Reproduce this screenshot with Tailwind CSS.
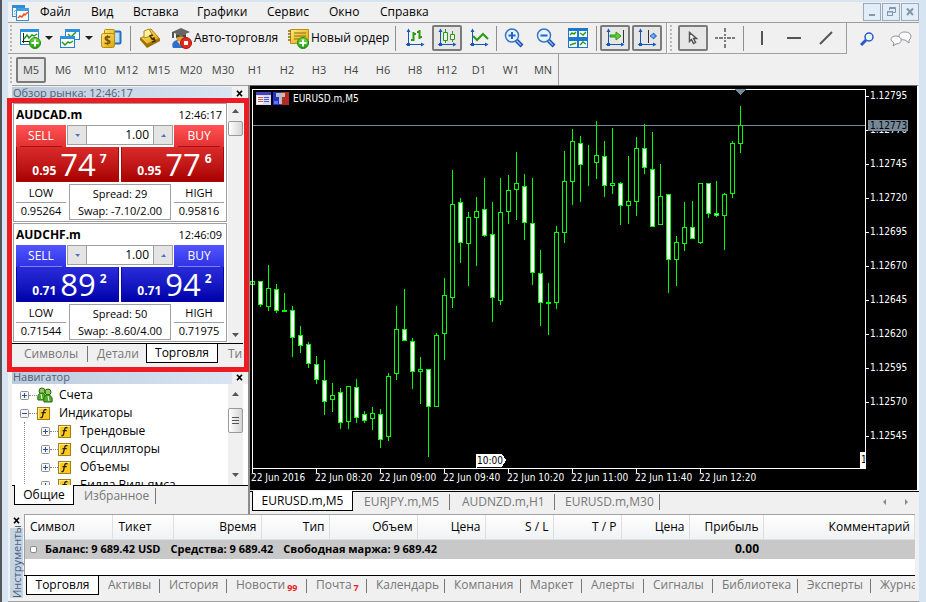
<!DOCTYPE html>
<html lang="ru">

<head>
   <meta charset="UTF-8">
   <meta name="viewport" content="width=device-width, initial-scale=1.0">
   <title>MetaTrader 5</title>
   <script src="https://cdn.jsdelivr.net/npm/@tailwindcss/browser@4"></script>
</head>

<body class="flex min-h-screen flex-col overflow-hidden border-l-2 border-[#54565c] bg-[#d7e4f2] pt-0.5 pr-[7px] pl-1.5 font-['Open_Sans','Noto_Sans',sans-serif] text-xs leading-4 text-black">

   <!-- shared icons -->
   <svg class="absolute size-0">
      <defs>
         <linearGradient id="gold" x1="0" y1="0" x2="1" y2="1"><stop offset="0" stop-color="#ffe97a"/><stop offset="1" stop-color="#dfa400"/></linearGradient>
         <linearGradient id="green" x1="0" y1="0" x2="0" y2="1"><stop offset="0" stop-color="#7fdc4c"/><stop offset="1" stop-color="#1d9a10"/></linearGradient>
         <symbol id="plus" viewBox="0 0 12 12"><circle cx="6" cy="6" r="5.5" fill="url(#green)" stroke="#1c8d12"/><path d="M6 2.500v7M2.500 6h7" stroke="#fff" stroke-width="2"/></symbol>
         <symbol id="axes" viewBox="0 0 20 20"><path d="M3.500 2v16M1 16.500h17" stroke="#1857b8" fill="none"/><path d="M1.500 4h4l-2-3.500zM16 14.500v4l3.500-2z" fill="#1857b8"/><path d="M2 15h3v3h-3z" fill="#1857b8"/></symbol>
         <symbol id="fx" viewBox="0 0 13 13"><rect x=".5" y=".5" width="12" height="12" fill="#ffc91d" stroke="#a87f12"/><path d="M1.500 11.500v-10h10" stroke="#fff2a8" fill="none"/><path d="M9.500 2.800c-2-.9-2.600.2-3 2.200l-.9 4c-.3 1.500-1 1.800-2.200 1.500M4.500 5.700h4.300" stroke="#222" stroke-width="1.300" fill="none"/></symbol>
         <symbol id="closed" viewBox="0 0 9 9"><rect x=".5" y=".5" width="8" height="8" rx="1" fill="#f6f6f6" stroke="#8f8f8f"/><path d="M2 4.500h5M4.500 2v5" stroke="#2f4f9e"/></symbol>
         <symbol id="opened" viewBox="0 0 9 9"><rect x=".5" y=".5" width="8" height="8" rx="1" fill="#f6f6f6" stroke="#8f8f8f"/><path d="M2 4.500h5" stroke="#2f4f9e"/></symbol>
         <symbol id="cross" viewBox="0 0 7 7"><path d="M1 .7l5 5.600M6 .7l-5 5.600" stroke="#000" stroke-width="1.700"/></symbol>
         <symbol id="lens" viewBox="0 0 20 20"><path d="M12 12l6 6" stroke="#174fae" stroke-width="4"/><path d="M12 12l5 5" stroke="#8ebcf2" stroke-width="1.500"/><circle cx="8" cy="7.500" r="6.500" fill="#e6f3fd" stroke="#3d74c4" stroke-width="1.500"/></symbol>
      </defs>
   </svg>

   <!-- menu -->
   <header class="flex h-[21px] items-center border-b border-[#9b9b9b] bg-[#f0f0f0] pl-1">
      <svg class="mr-[11px] size-[17px] shrink-0" viewBox="0 0 17 17">
         <rect x=".5" y="1.500" width="12" height="11" fill="#fff" stroke="#2c8ed6"/><path d="M0 1h13v3h-13z" fill="#2c8ed6"/><path d="M2 8l2-2M2 10h3" stroke="#6db3e6"/>
         <rect x="4.500" y="4.500" width="12" height="12" fill="#fff" stroke="#2c8ed6"/><path d="M4 4h13v3h-13z" fill="#3e9fe2"/><path d="M6 14l2-2 2 1 2-3 1 1 3-3" fill="none" stroke="#f05020" stroke-width="1.500"/>
      </svg>
      <nav class="flex flex-1 whitespace-nowrap">
         <a href="#" class="w-[51px]">Файл</a>
         <a href="#" class="w-[42px]">Вид</a>
         <a href="#" class="w-16">Вставка</a>
         <a href="#" class="w-[70px]">Графики</a>
         <a href="#" class="w-[62px]">Сервис</a>
         <a href="#" class="w-[51px]">Окно</a>
         <a href="#">Справка</a>
      </nav>
      <div class="flex gap-px">
         <button aria-label="Свернуть" class="flex size-[18px] items-center justify-center border border-[#9aaabb] bg-[#e1edf9]"><svg width="12" height="12"><path d="M3 8h6v2h-6z" fill="#8496aa"/></svg></button>
         <button aria-label="Восстановить" class="flex size-[18px] items-center justify-center border border-[#9aaabb] bg-[#e1edf9]"><svg width="12" height="12" fill="none" stroke="#8496aa"><path d="M4.500 4v-2.500h6v5h-2.500M4 2.500h7"/><rect x="2.500" y="5.500" width="5" height="4"/><path d="M2 6h6"/></svg></button>
         <button aria-label="Закрыть" class="flex size-[18px] items-center justify-center border border-[#9aaabb] bg-[#e1edf9]"><svg width="12" height="12"><path d="M3 2.500l6 6.500M9 2.500l-6 6.500" stroke="#8496aa" stroke-width="2"/></svg></button>
      </div>
   </header>

   <!-- toolbar -->
   <div class="flex h-[31px] bg-[#f0f0f0]">
      <div class="flex items-center border-r border-b border-[#a0a0a0] pl-0.5">
         <i class="mr-1.5 h-[26px] w-0.5 border-l-2 border-dotted border-[#b8b8b8]"></i>
         <button aria-label="Новый график" class="flex w-6 justify-center"><svg width="22" height="22"><rect x="1.500" y="2.500" width="18" height="15" fill="#fff" stroke="#2180cf"/><path d="M1 2h19v3h-19z" fill="#2b91e0"/><path d="M4.500 6v10M3 14.500h14" stroke="#222"/><path d="M5 12l3-4 2 3 3-3 2 1 3-2" fill="none" stroke="#249a16" stroke-width="1.500"/><use href="#plus" x="10" y="10" width="12" height="12"/></svg></button>
         <button aria-label="Список графиков" class="flex w-3.5 justify-center"><svg width="8" height="4"><path d="M0 0h8l-4 4z" fill="#222"/></svg></button>
         <button aria-label="Профили" class="ml-0.5 flex w-6 justify-center"><svg width="22" height="22"><rect x="6.500" y="2.500" width="14" height="10" fill="#fff" stroke="#2180cf"/><path d="M6 2h15v3h-15z" fill="#2b91e0"/><path d="M9 7l3 3 5-5" fill="none" stroke="#249a16" stroke-width="1.500"/><rect x="1.500" y="9.500" width="14" height="11" fill="#fff" stroke="#2180cf"/><path d="M1 9h15v3h-15z" fill="#2b91e0"/><path d="M3 15l3 3 3-3 2 1 3-2" fill="none" stroke="#249a16" stroke-width="1.500"/></svg></button>
         <button aria-label="Список профилей" class="flex w-3.5 justify-center"><svg width="8" height="4"><path d="M0 0h8l-4 4z" fill="#222"/></svg></button>
         <button aria-label="Обзор рынка" class="ml-[3px] flex w-6 justify-center"><svg width="22" height="22"><rect x="8.500" y="4.500" width="12" height="12" rx="1" fill="#b9dcf8" stroke="#1f6fc0" stroke-width="2"/><rect x="4.500" y="2.500" width="10" height="8" rx="1" fill="url(#gold)" stroke="#ba8a08"/><rect x="1.500" y="6.500" width="13" height="14" rx="2" fill="url(#gold)" stroke="#ba8a08"/><text x="4" y="18" class="fill-[#7a5200] text-xs font-bold">$</text></svg></button>
         <i class="mx-[7px] h-[25px] w-px bg-[#8e8e8e]"></i>
         <button aria-label="Глубина рынка" class="flex w-6 justify-center"><svg width="22" height="22"><path d="M1 13l7 8 13-7v-3l-13 6-7-7z" fill="#9b7108"/><path d="M2 11l6 6 12-6-8-9-4 1-2 6z" fill="url(#gold)" stroke="#ad8110"/><path d="M5 4l5-2 3 5-4 3-4 1z" fill="#fff0a0" stroke="#b08a20"/><path d="M14 8l-3 1 2 3 2-1 1 3-3 1" fill="none" stroke="#4a3500" stroke-width="1.500"/></svg></button>
         <button class="ml-2 flex w-[108px] items-center gap-px whitespace-nowrap"><svg class="shrink-0" width="23" height="22"><path d="M3 21c-2-4 0-7 4-8l8-1 5 9z" fill="#2f6fd0"/><ellipse cx="11" cy="10" rx="5" ry="5" fill="#d7a13b"/><path d="M7 14l4 5 4-5z" fill="#f2d27c"/><path d="M2 5l9-4 9 4-9 4z" fill="#666"/><path d="M6 7v4c3-2 7-2 10 0v-4l-5 2z" fill="#444"/><path d="M3 5v6" stroke="#555" stroke-width="2"/><circle cx="16" cy="16" r="5.500" fill="#e5281c" stroke="#b4130c"/><path d="M14 14h4v4h-4z" fill="#fff"/></svg>Авто-торговля</button>
         <button class="ml-[9px] flex w-[101px] items-center gap-px whitespace-nowrap"><svg class="shrink-0" width="23" height="22"><path d="M3.500 2.500h18v14h-18z" fill="url(#gold)" stroke="#c08e0c"/><path d="M1 4h3M1 7h3M1 10h3M1 13h3" stroke="#8b6a12" stroke-width="1.500"/><path d="M7 6h12M7 9h12M7 12h8" stroke="#8c6a10"/><use href="#plus" x="10" y="10" width="12" height="12"/></svg>Новый ордер</button>
         <i class="mx-[7px] h-[25px] w-px bg-[#8e8e8e]"></i>
         <div class="flex gap-0.5">
            <button aria-label="Бары" class="-ml-[3px] flex size-[30px] items-center justify-center"><svg width="20" height="20"><use href="#axes"/><path d="M8.500 4v9M6 12h3M8 6h3M14.500 2v9M12 4h3M14 9h3" stroke="#2b9b10" stroke-width="2"/></svg></button>
            <button aria-label="Свечи" class="flex h-[26px] w-[30px] items-center justify-center self-center rounded-xs border-2 border-[#7b7b7b] bg-[#e6e6e6]"><svg width="20" height="20"><use href="#axes"/><path d="M8.500 1v14M15.500 3v11" stroke="#2b9b10"/><path d="M6.500 4.500h4v8h-4zM13.500 6.500h4v5h-4z" fill="#eee" stroke="#2b9b10"/></svg></button>
            <button aria-label="Линия" class="flex size-[30px] items-center justify-center"><svg width="20" height="20"><use href="#axes"/><path d="M4 8l4 4 6-6 5 5" stroke="#2b9b10" stroke-width="2" fill="none"/></svg></button>
         </div>
         <i class="mx-[2px] h-[25px] w-px bg-[#8e8e8e]"></i>
         <div class="flex gap-0.5">
            <button aria-label="Увеличить" class="flex size-[30px] items-center justify-center"><svg width="20" height="20"><use href="#lens"/><path d="M8 4v7M4.500 7.500h7" stroke="#2167c2" stroke-width="2"/></svg></button>
            <button aria-label="Уменьшить" class="flex size-[30px] items-center justify-center"><svg width="20" height="20"><use href="#lens"/><path d="M4.500 7.500h7" stroke="#2167c2" stroke-width="2"/></svg></button>
            <button aria-label="Упорядочить окна" class="flex size-[30px] items-center justify-center"><svg width="20" height="20"><path d="M0 0h20v20h-20z" fill="#1b77cf"/><path d="M1 3h8v6h-8zM11 3h8v6h-8zM1 13h8v6h-8zM11 13h8v6h-8z" fill="#fff"/><path d="M2 7l2-2 2 1 2-2M12 5l3 2 3-3M2 17l3-1 3-1M12 17l3-3 3 2" fill="none" stroke="#2b9b10" stroke-width="1.500"/></svg></button>
         </div>
         <i class="mx-[3px] h-[25px] w-px bg-[#8e8e8e]"></i>
         <div class="flex gap-0.5">
            <button aria-label="Автопрокрутка" class="flex h-[26px] w-[30px] items-center justify-center rounded-xs border-2 border-[#7b7b7b] bg-[#e6e6e6]"><svg width="20" height="20"><use href="#axes"/><path d="M5 7h6v-3l5 4-5 4v-3h-6z" fill="#6acb3a" stroke="#2b9b10"/><path d="M18.500 2v13" stroke="#333"/></svg></button>
            <button aria-label="Сдвиг графика" class="flex h-[26px] w-[30px] items-center justify-center rounded-xs border-2 border-[#7b7b7b] bg-[#e6e6e6]"><svg width="20" height="20"><use href="#axes"/><path d="M11.500 2v13" stroke="#333"/><path d="M19 7h-2v-2l-4 3 4 3v-2h2z" fill="#78b2f4" stroke="#2167c2"/></svg></button>
         </div>
         <i class="w-1"></i>
      </div>
      <div class="flex items-center border-r border-b border-l border-[#a0a0a0] border-l-white pl-0.5">
         <i class="mr-1.5 h-[26px] w-0.5 border-l-2 border-dotted border-[#b8b8b8]"></i>
         <div class="flex items-center gap-0.5">
            <button aria-label="Курсор" class="flex h-[26px] w-[30px] items-center justify-center rounded-xs border-2 border-[#7b7b7b] bg-[#e6e6e6]"><svg width="10" height="14"><path d="M1.500 1.500v9l2-2 2 4 2-1-2-4h3z" fill="#fff" stroke="#555" stroke-width="1.500"/></svg></button>
            <button aria-label="Перекрестие" class="flex size-[30px] items-center justify-center"><svg width="20" height="20" stroke="#555" stroke-width="1.500"><path d="M10 0v4M10 6v2M10 12v2M10 16v4M0 10h3M4 10h4M12 10h4M17 10h3M9 10h2"/></svg></button>
         </div>
         <i class="mx-[3px] h-[25px] w-px bg-[#8e8e8e]"></i>
         <div class="flex gap-0.5 pr-[5px]">
            <button aria-label="Вертикальная линия" class="flex size-[30px] items-center justify-center"><svg width="14" height="14"><path d="M7 0v14" stroke="#555" stroke-width="2"/></svg></button>
            <button aria-label="Горизонтальная линия" class="flex size-[30px] items-center justify-center"><svg width="14" height="14"><path d="M0 7h14" stroke="#555" stroke-width="2"/></svg></button>
            <button aria-label="Трендовая линия" class="flex size-[30px] items-center justify-center"><svg width="14" height="14"><path d="M1 13l12-12" stroke="#555" stroke-width="2"/></svg></button>
         </div>
      </div>
      <div class="flex flex-1 items-center justify-end gap-4 pr-[7px]">
         <button aria-label="Поиск"><svg width="14" height="14"><path d="M6 8l-5 5" stroke="#2558c9" stroke-width="3"/><circle cx="9" cy="5" r="4" fill="#e9f3ff" stroke="#2558c9" stroke-width="1.500"/></svg></button>
         <button aria-label="Чат"><svg width="22" height="18" fill="#fafafa" stroke="#929298"><path d="M19 13v-3c3-2 3-8-4-8-8 0-8 8 0 8z"/><path d="M3 16l1-3c-5-3-3-7 2-7 7 0 7 8 0 8z"/></svg></button>
      </div>
   </div>

   <!-- timeframes -->
   <div class="flex h-[31px] bg-[#f0f0f0] text-[11px] text-[#444]">
      <div class="flex items-center gap-0.5 border-r border-[#a0a0a0] pl-0.5">
         <i class="mr-0.5 h-[26px] w-0.5 border-l-2 border-dotted border-[#b8b8b8]"></i>
         <button class="h-[26px] w-[30px] rounded-xs border-2 border-[#7b7b7b] bg-[#e6e6e6]">M5</button>
         <button class="w-[30px]">M6</button>
         <button class="w-[30px]">M10</button>
         <button class="w-[30px]">M12</button>
         <button class="w-[30px]">M15</button>
         <button class="w-[30px]">M20</button>
         <button class="w-[30px]">M30</button>
         <button class="w-[30px]">H1</button>
         <button class="w-[30px]">H2</button>
         <button class="w-[30px]">H3</button>
         <button class="w-[30px]">H4</button>
         <button class="w-[30px]">H6</button>
         <button class="w-[30px]">H8</button>
         <button class="w-[30px]">H12</button>
         <button class="w-[30px]">D1</button>
         <button class="w-[30px]">W1</button>
         <button class="w-[30px]">MN</button>
      </div>
   </div>

   <main class="flex flex-1 bg-[#f0f0f0]">

      <!-- left column -->
      <aside class="relative flex w-[242px] shrink-0 flex-col border-r-2 border-[#8c8c8c] pl-1">
         <div class="flex h-4 items-end justify-between border-t border-[#a0a0a0] pr-[5px]">
            <h2 class="h-3.5 w-[220px] bg-linear-to-r from-[#bccbdc] to-[#d9e5f3] pl-px text-[11px] leading-3 text-[#4d6075]">Обзор рынка: 12:46:17</h2>
            <button aria-label="Закрыть"><svg width="7" height="11"><use href="#cross" width="7" height="7"/></svg></button>
         </div>
         <div class="flex h-[242px] bg-white pt-0.5 pl-px">
            <div class="flex w-[214px] flex-col gap-px">
               <section class="h-[119px] border border-[#a0a0a0] px-0.5">
                  <div class="flex h-[21px] items-center justify-between pr-0.5"><h3 class="font-bold">AUDCAD.m</h3><time class="text-[11px]">12:46:17</time></div>
                  <div class="flex justify-between text-white">
                     <button class="h-[22px] w-[50px] bg-linear-to-b from-[#ff5254] to-[#e33031]"><span class="mx-1 block border-b border-[#a31313] leading-5">SELL</span></button>
                     <div class="flex h-5 w-[106px] border border-[#a0a0a0] text-black">
                        <button aria-label="Меньше" class="flex w-[18px] items-center justify-center bg-[#e4e4e4]"><svg width="5" height="3"><path d="M0 0h5l-2 3z" fill="#5570c4"/></svg></button>
                        <input aria-label="Объем AUDCAD" value="1.00" class="w-0 flex-1 border-x border-[#a0a0a0] bg-white pr-1 text-right">
                        <button aria-label="Больше" class="flex w-[18px] items-center justify-center bg-[#e4e4e4]"><svg width="5" height="3"><path d="M0 3h5l-2-3z" fill="#5570c4"/></svg></button>
                     </div>
                     <button class="h-[22px] w-[50px] bg-linear-to-b from-[#ff5254] to-[#e33031]"><span class="mx-1 block border-b border-[#a31313] leading-5">BUY</span></button>
                  </div>
                  <div class="flex gap-0.5 text-white">
                     <p class="flex h-[35px] flex-1 justify-center gap-1 border border-t-0 border-[#a80808] bg-linear-to-b from-[#db2a2a] to-[#a90000] pl-1"><b class="pt-4">0.95</b><span class="text-[31px] leading-[35px]">74</span><b class="pt-1">7</b></p>
                     <p class="flex h-[35px] flex-1 justify-center gap-1 border border-t-0 border-[#a80808] bg-linear-to-b from-[#db2a2a] to-[#a90000] pl-1"><b class="pt-4">0.95</b><span class="text-[31px] leading-[35px]">77</span><b class="pt-1">6</b></p>
                  </div>
                  <div class="mt-0.5 flex justify-between text-center text-[11px]">
                     <p class="w-[50px]"><span class="block border-b border-[#a0a0a0] leading-[18px]">LOW</span><span class="block leading-4">0.95264</span></p>
                     <p class="w-[102px] border border-[#a0a0a0] leading-[17px]">Spread: 29<br>Swap: -7.10/2.00</p>
                     <p class="w-[50px]"><span class="block border-b border-[#a0a0a0] leading-[18px]">HIGH</span><span class="block leading-4">0.95816</span></p>
                  </div>
               </section>
               <section class="h-[119px] border border-[#a0a0a0] px-0.5">
                  <div class="flex h-[21px] items-center justify-between pr-0.5"><h3 class="font-bold">AUDCHF.m</h3><time class="text-[11px]">12:46:09</time></div>
                  <div class="flex justify-between text-white">
                     <button class="h-[22px] w-[50px] bg-linear-to-b from-[#5254ff] to-[#3031e3]"><span class="mx-1 block border-b border-[#8080e8] leading-5">SELL</span></button>
                     <div class="flex h-5 w-[106px] border border-[#a0a0a0] text-black">
                        <button aria-label="Меньше" class="flex w-[18px] items-center justify-center bg-[#e4e4e4]"><svg width="5" height="3"><path d="M0 0h5l-2 3z" fill="#5570c4"/></svg></button>
                        <input aria-label="Объем AUDCHF" value="1.00" class="w-0 flex-1 border-x border-[#a0a0a0] bg-white pr-1 text-right">
                        <button aria-label="Больше" class="flex w-[18px] items-center justify-center bg-[#e4e4e4]"><svg width="5" height="3"><path d="M0 3h5l-2-3z" fill="#5570c4"/></svg></button>
                     </div>
                     <button class="h-[22px] w-[50px] bg-linear-to-b from-[#5254ff] to-[#3031e3]"><span class="mx-1 block border-b border-[#8080e8] leading-5">BUY</span></button>
                  </div>
                  <div class="flex gap-0.5 text-white">
                     <p class="flex h-[35px] flex-1 justify-center gap-1 border border-t-0 border-[#0808a8] bg-linear-to-b from-[#2a2adb] to-[#0000a9] pl-1"><b class="pt-4">0.71</b><span class="text-[31px] leading-[35px]">89</span><b class="pt-1">2</b></p>
                     <p class="flex h-[35px] flex-1 justify-center gap-1 border border-t-0 border-[#0808a8] bg-linear-to-b from-[#2a2adb] to-[#0000a9] pl-1"><b class="pt-4">0.71</b><span class="text-[31px] leading-[35px]">94</span><b class="pt-1">2</b></p>
                  </div>
                  <div class="mt-0.5 flex justify-between text-center text-[11px]">
                     <p class="w-[50px]"><span class="block border-b border-[#a0a0a0] leading-[18px]">LOW</span><span class="block leading-4">0.71544</span></p>
                     <p class="w-[102px] border border-[#a0a0a0] leading-[17px]">Spread: 50<br>Swap: -8.60/4.00</p>
                     <p class="w-[50px]"><span class="block border-b border-[#a0a0a0] leading-[18px]">HIGH</span><span class="block leading-4">0.71975</span></p>
                  </div>
               </section>
            </div>
            <div class="ml-px flex w-[15px] flex-col items-center bg-[#f0f0f0] py-1.5">
               <svg width="7" height="4"><path d="M0 4h7l-3.500-4z" fill="#555"/></svg>
               <i class="mt-2 h-[15px] w-[15px] rounded-xs border border-[#999] bg-linear-to-r from-white to-[#d4d4d4]"></i>
               <svg class="mt-auto" width="7" height="4"><path d="M0 0h7l-3.500 4z" fill="#555"/></svg>
            </div>
         </div>
         <nav class="mr-[5px] flex h-[27px] overflow-hidden border-t border-black bg-[#f0f0f0] whitespace-nowrap text-[#777] [&>a]:shrink-0">
            <a href="#" class="my-0.5 h-4 w-[76px] border-r border-[#777] pl-3">Символы</a>
            <a href="#" class="mt-0.5 w-[58px] pl-[9px]">Детали</a>
            <a href="#" class="-mt-px h-5 w-[72px] border border-t-0 border-black bg-white pt-0.5 text-center text-black">Торговля</a>
            <a href="#" class="mt-0.5 pl-2.5">Тики</a>
         </nav>
         <!-- highlight frame around the market watch -->
         <div class="pointer-events-none absolute top-[13px] -left-px h-[274px] w-[242px] border-[5px] border-[#ed1c24]"></div>

         <div class="flex h-3.5 items-end justify-between pr-[5px]">
            <h2 class="h-[13px] w-[220px] bg-linear-to-r from-[#bccbdc] to-[#d9e5f3] pl-px text-[11px] leading-3 text-[#4d6075]">Навигатор</h2>
            <button aria-label="Закрыть"><svg width="7" height="10"><use href="#cross" width="7" height="7"/></svg></button>
         </div>
         <div class="flex h-[101px] bg-white">
            <ul class="h-full flex-1 overflow-hidden pt-0.5 pl-2">
               <li class="flex h-[18px] items-center"><svg width="9" height="9"><use href="#closed"/></svg><i class="w-2 border-t border-dotted border-[#888]"></i><svg width="16" height="16" fill="#55ad2c" stroke="#24690e"><circle cx="5" cy="4" r="3" fill="#8fca5a"/><path d="M1 13c-1-5 1-7 4-7s4 3 3 7z"/><circle cx="11" cy="5" r="3" fill="#8fca5a"/><path d="M7 15c-1-5 1-7 4-7s5 3 4 7z"/><path d="M4 7l1 5M11 9l1 5" stroke="#fff"/></svg><span class="ml-[6px]">Счета</span></li>
               <li class="flex h-[18px] items-center"><svg width="9" height="9"><use href="#opened"/></svg><i class="w-2 border-t border-dotted border-[#888]"></i><svg width="13" height="13"><use href="#fx"/></svg><span class="ml-[9px]">Индикаторы</span></li>
               <li class="ml-1 border-l border-dotted border-[#888] pl-4">
                  <ul class="whitespace-nowrap">
                     <li class="flex h-[18px] items-center"><svg width="9" height="9"><use href="#closed"/></svg><i class="w-2 border-t border-dotted border-[#888]"></i><svg width="13" height="13"><use href="#fx"/></svg><span class="ml-[9px]">Трендовые</span></li>
                     <li class="flex h-[18px] items-center"><svg width="9" height="9"><use href="#closed"/></svg><i class="w-2 border-t border-dotted border-[#888]"></i><svg width="13" height="13"><use href="#fx"/></svg><span class="ml-[9px]">Осцилляторы</span></li>
                     <li class="flex h-[18px] items-center"><svg width="9" height="9"><use href="#closed"/></svg><i class="w-2 border-t border-dotted border-[#888]"></i><svg width="13" height="13"><use href="#fx"/></svg><span class="ml-[9px]">Объемы</span></li>
                     <li class="flex h-[18px] items-center"><svg width="9" height="9"><use href="#closed"/></svg><i class="w-2 border-t border-dotted border-[#888]"></i><svg width="13" height="13"><use href="#fx"/></svg><span class="ml-[9px]">Билла Вильямса</span></li>
                  </ul>
               </li>
            </ul>
            <div class="mr-[5px] flex w-[15px] flex-col items-center bg-[#f0f0f0] py-2">
               <svg width="7" height="4"><path d="M0 4h7l-3.500-4z" fill="#555"/></svg>
               <i class="mt-3 flex h-[25px] w-[15px] items-center justify-center rounded-xs border border-[#999] bg-linear-to-r from-white to-[#d4d4d4]"><svg width="7" height="8"><path d="M0 .5h7M0 3.500h7M0 6.500h7" stroke="#555"/></svg></i>
               <svg class="mt-auto" width="7" height="4"><path d="M0 0h7l-3.500 4z" fill="#555"/></svg>
            </div>
         </div>
         <nav class="flex h-5 border-t border-black pl-0.5 text-[#777]">
            <a href="#" class="-mt-px h-5 w-[60px] border border-t-0 border-black bg-white pt-0.5 text-center text-black">Общие</a>
            <a href="#" class="my-0.5 h-4 w-[82px] border-r border-[#777] pl-2.5 leading-[15px]">Избранное</a>
         </nav>
      </aside>

      <!-- chart window -->
      <section class="flex min-w-0 flex-1 flex-col">
         <div class="flex h-[405px] border-t border-r-2 border-[#686868] border-r-white bg-black text-white">
            <div class="min-w-0 flex-1">
               <svg id="chart" class="block h-[404px] w-full font-['DejaVu_Sans_Condensed','DejaVu_Sans',sans-serif] text-[10px]" shape-rendering="crispEdges">
                  <svg x="6" y="6" width="34" height="13">
                     <rect width="15" height="13" fill="#d9dcea"/><path d="M0 0h15v3h-15z" fill="#4444c0"/><path d="M1 4h6v8h-6z" fill="#fff"/><path d="M2 5.500h5M2 7.500h5M2 9.500h5" stroke="#d8503a"/><path d="M8 5.500h5M8 7.500h5M8 9.500h5" stroke="#4a56e0"/>
                     <rect x="17" width="8" height="13" fill="#2233cc"/><rect x="25" width="8" height="13" fill="#b02a26"/><path d="M20 1h9v4h-9zM23 5h3v7h-3z" fill="#bdbdbd"/><path d="M18 9h4v3h-4z" fill="#5f76f0"/>
                  </svg>
                  <text x="43" y="16" fill="#fff">EURUSD.m,M5</text>
                  <path d="M3 39.500h613" stroke="#778899"/>
                  <g id="candles" stroke="#00ff00"></g>
                  <path d="M226 383v-15h26l4 6-4 7h-25v2z" fill="#fff"/>
                  <text x="227" y="378" fill="#000">10:00</text>
                  <path d="M610 366h6v16h-6z" fill="#fff"/>
                  <svg x="610" y="366" width="6" height="12"><text x="1" y="11">1</text></svg>
                  <path d="M2.500 3v380M2 3.500h614M615.500 3v380M2 382.500h614" stroke="#fff" fill="none"/>
                  <path d="M485 3h11l-5.500 6z" fill="#778899"/>
                  <g id="times" fill="#fff" stroke="none"></g>
               </svg>
            </div>
            <!-- price scale -->
            <div class="relative w-[51px] shrink-0 pt-px font-['DejaVu_Sans_Condensed','DejaVu_Sans',sans-serif] text-[10px]">
               <ul class="-mt-2">
                  <li class="flex h-[34px] items-center gap-px"><i class="h-px w-[3px] bg-white"></i>1.12795</li>
                  <li class="flex h-[34px] items-center gap-px"><i class="h-px w-[3px] bg-white"></i>1.12770</li>
                  <li class="flex h-[34px] items-center gap-px"><i class="h-px w-[3px] bg-white"></i>1.12745</li>
                  <li class="flex h-[34px] items-center gap-px"><i class="h-px w-[3px] bg-white"></i>1.12720</li>
                  <li class="flex h-[34px] items-center gap-px"><i class="h-px w-[3px] bg-white"></i>1.12695</li>
                  <li class="flex h-[34px] items-center gap-px"><i class="h-px w-[3px] bg-white"></i>1.12670</li>
                  <li class="flex h-[34px] items-center gap-px"><i class="h-px w-[3px] bg-white"></i>1.12645</li>
                  <li class="flex h-[34px] items-center gap-px"><i class="h-px w-[3px] bg-white"></i>1.12620</li>
                  <li class="flex h-[34px] items-center gap-px"><i class="h-px w-[3px] bg-white"></i>1.12595</li>
                  <li class="flex h-[34px] items-center gap-px"><i class="h-px w-[3px] bg-white"></i>1.12570</li>
                  <li class="flex h-[34px] items-center gap-px"><i class="h-px w-[3px] bg-white"></i>1.12545</li>
               </ul>
               <b class="absolute top-[34px] left-0.5 h-[11px] w-[40px] bg-[#778899] pl-0.5 leading-[11px] font-normal text-black">1.12773</b>
            </div>
         </div>
         <nav class="mt-px flex h-5 items-start border-t border-black pl-0.5 whitespace-nowrap text-[#777]">
            <a href="#" class="-mt-px h-5 w-[101px] border border-t-0 border-black bg-white pt-0.5 text-center text-black">EURUSD.m,M5</a>
            <a href="#" class="mt-0.5 h-4 w-[97px] border-r border-[#777] pl-[11px]">EURJPY.m,M5</a>
            <a href="#" class="mt-0.5 h-4 w-[105px] border-r border-[#777] pl-3">AUDNZD.m,H1</a>
            <a href="#" class="mt-0.5 h-4 w-[105px] border-r border-[#777] pl-2.5">EURUSD.m,M30</a>
            <span class="ml-auto flex gap-[19px] pt-[7px] pr-[11px]">
               <button aria-label="Назад"><svg class="block" width="3" height="6"><path d="M3 0v6l-3-3z" fill="#888"/></svg></button>
               <button aria-label="Вперед"><svg class="block" width="3" height="6"><path d="M0 0v6l3-3z" fill="#888"/></svg></button>
            </span>
         </nav>
      </section>
   </main>

   <!-- toolbox -->
   <footer class="flex h-[88px] border-b border-[#a0a0a0] bg-[#f0f0f0] pr-1">
      <div class="flex w-4 shrink-0 flex-col items-center gap-1 pt-[3px]">
         <button aria-label="Закрыть"><svg class="block" width="7" height="7"><use href="#cross"/></svg></button>
         <h2 class="h-[70px] w-[13px] rotate-180 bg-[#c5d4e5] text-[11px] leading-[13px] text-[#4d6075] [writing-mode:vertical-rl]">Инструменты</h2>
      </div>
      <div class="flex min-w-0 flex-1 flex-col">
         <div class="h-[61px] border-t border-l border-[#a0a0a0] bg-white">
            <table class="w-full table-fixed">
               <thead>
                  <tr class="h-6 bg-linear-to-b from-white to-[#f1f2f4] text-right [&>th]:border-r [&>th]:border-b [&>th]:border-[#dedfe1] [&>th]:pr-1 [&>th]:font-normal">
                     <th class="w-[87px] pl-[5px] text-left">Символ</th>
                     <th class="w-[61px] pl-1.5 text-left">Тикет</th>
                     <th class="w-[88px]">Время</th>
                     <th class="w-[68px]">Тип</th>
                     <th class="w-[88px]">Объем</th>
                     <th class="w-[68px]">Цена</th>
                     <th class="w-[68px]">S / L</th>
                     <th class="w-[68px]">T / P</th>
                     <th class="w-[68px]">Цена</th>
                     <th class="w-[74px]">Прибыль</th>
                     <th>Комментарий</th>
                  </tr>
               </thead>
               <tbody>
                  <tr class="h-5 bg-[#c8c8c8] text-[11px] font-bold whitespace-nowrap">
                     <td colspan="9" class="pl-[5px]"><span class="flex items-center"><i class="mr-2 size-[7px] rounded-xs border border-[#8a8a8a] bg-white"></i><span class="mr-2.5">Баланс: 9 689.42 USD</span><span class="mr-2.5">Средства: 9 689.42</span><span>Свободная маржа: 9 689.42</span></span></td>
                     <td class="pr-1 text-right text-xs">0.00</td>
                     <td></td>
                  </tr>
               </tbody>
            </table>
         </div>
         <nav class="flex h-[21px] overflow-hidden border-t border-black pl-0.5 whitespace-nowrap text-[#777] [&_sub]:ml-0.5 [&_sub]:text-[9px] [&_sub]:font-bold [&_sub]:text-[#ed1c24] [&>a]:shrink-0">
            <a href="#" class="-mt-px h-5 w-[73px] border border-t-0 border-black bg-white pt-0.5 text-center text-black">Торговля</a>
            <a href="#" class="mt-[3px] h-3.5 w-[61px] border-r border-[#777] pl-[9px] leading-3">Активы</a>
            <a href="#" class="mt-[3px] h-3.5 w-[67px] border-r border-[#777] pl-[9px] leading-3">История</a>
            <a href="#" class="mt-[3px] h-3.5 w-20 border-r border-[#777] pl-[9px] leading-3">Новости<sub>99</sub></a>
            <a href="#" class="mt-[3px] h-3.5 w-[60px] border-r border-[#777] pl-[9px] leading-3">Почта<sub>7</sub></a>
            <a href="#" class="mt-[3px] h-3.5 w-[78px] border-r border-[#777] pl-[9px] leading-3">Календарь</a>
            <a href="#" class="mt-[3px] h-3.5 w-[76px] border-r border-[#777] pl-[9px] leading-3">Компания</a>
            <a href="#" class="mt-[3px] h-3.5 w-[61px] border-r border-[#777] pl-[9px] leading-3">Маркет</a>
            <a href="#" class="mt-[3px] h-3.5 w-[62px] border-r border-[#777] pl-[9px] leading-3">Алерты</a>
            <a href="#" class="mt-[3px] h-3.5 w-[69px] border-r border-[#777] pl-[9px] leading-3">Сигналы</a>
            <a href="#" class="mt-[3px] h-3.5 w-[85px] border-r border-[#777] pl-[9px] leading-3">Библиотека</a>
            <a href="#" class="mt-[3px] h-3.5 w-[73px] border-r border-[#777] pl-[9px] leading-3">Эксперты</a>
            <a href="#" class="mt-[3px] h-3.5 pl-[9px] leading-3">Журнал</a>
         </nav>
      </div>
   </footer>

   <script>
      // high, body top, body bottom, low, 1 = falling candle
      const candles = [
         [281,281,285,285,0],[281,281,305,307,1],[265,288,307,311,0],[284,289,311,313,1],[293,310,312,312,0],
         [306,310,338,357,1],[326,335,346,353,1],[342,344,364,368,1],[356,364,380,384,1],[360,380,402,415,1],
         [383,395,400,412,0],[388,392,423,429,1],[386,386,422,429,0],[379,387,418,423,1],[411,414,421,423,1],
         [407,413,419,430,0],[409,414,440,448,1],[373,376,437,441,0],[306,329,374,380,0],[289,329,341,341,1],
         [338,341,372,389,1],[357,369,372,404,0],[369,369,407,457,1],[333,335,407,407,0],[278,295,334,360,0],
         [170,204,298,308,0],[198,202,243,263,1],[212,217,244,286,0],[197,211,218,266,0],[178,209,236,237,1],
         [202,234,298,322,1],[178,212,301,305,0],[175,190,212,224,0],[152,183,190,220,0],[174,186,223,240,1],
         [178,223,273,285,1],[250,273,303,326,1],[283,302,304,335,0],[226,232,303,309,0],[151,181,233,243,0],
         [129,141,182,205,0],[136,143,165,202,1],[145,162,163,186,0],[121,155,163,179,0],[141,156,186,197,1],
         [128,183,186,194,0],[182,183,206,225,1],[156,201,206,224,0],[137,148,202,216,0],[124,148,168,174,1],
         [132,169,227,227,1],[164,196,225,225,0],[194,194,260,293,1],[236,242,260,286,0],[202,227,244,251,0],
         [201,227,239,239,1],[183,183,243,244,0],[183,183,214,218,1],[181,213,216,217,1],[193,194,216,250,0],
         [141,143,194,198,0],[106,125,144,153,0]
      ];
      const top0 = 86;
      let out = "";
      candles.forEach(([high, top, bottom, low, down], i) => {
         const x = 2 + i * 8;
         out += `<path d="M${x + 0.5} ${high - top0}V${low - top0}"/>`;
         out += `<rect x="${x - 1.5}" y="${top - top0 + 0.5}" width="4" height="${bottom - top - 1}" fill="${down ? "#fff" : "#000"}"/>`;
      });
      document.getElementById("candles").innerHTML = out;

      const times = ["22 Jun 2016", "22 Jun 08:20", "22 Jun 09:00", "22 Jun 09:40", "22 Jun 10:20", "22 Jun 11:00", "22 Jun 11:40", "22 Jun 12:20"];
      document.getElementById("times").innerHTML = times.map((t, i) =>
         `<rect x="${2 + i * 64}" y="383" width="1" height="4"/><text x="${1 + i * 64}" y="395">${t}</text>`).join("");
   </script>
</body>

</html>
